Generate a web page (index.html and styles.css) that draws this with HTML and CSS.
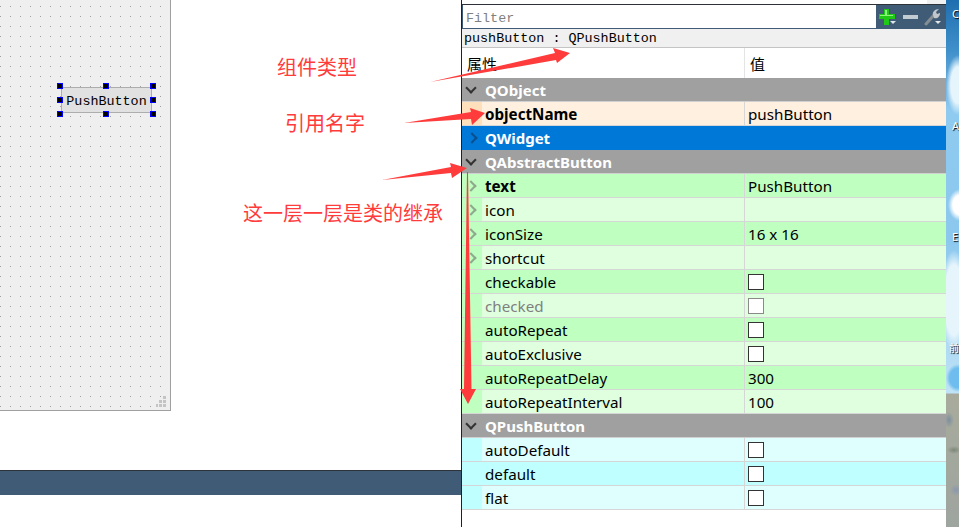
FILE: index.html
```html
<!DOCTYPE html>
<html lang="en">
<head>
    <meta charset="UTF-8">
    <meta name="viewport" content="width=device-width, initial-scale=1.0">
    <title>Property Editor</title>
    <link rel="stylesheet" href="styles.css">
</head>
<body>
    <div class="screen">
        <div class="designer">
            <div class="canvas">
                <div class="widget">
                    <span class="push-button">PushButton</span>
                    <i class="handle h-tl"></i><i class="handle h-tc"></i><i class="handle h-tr"></i>
                    <i class="handle h-ml"></i><i class="handle h-mr"></i>
                    <i class="handle h-bl"></i><i class="handle h-bc"></i><i class="handle h-br"></i>
                </div>
                <svg class="grip" width="11" height="12" viewBox="0 0 11 12">
                    <path fill="#c4c4c4" d="M7 0h3v3H7zM3 4h3v3H3zM7 4h3v3H7zM0 8h2v3H0zM3 8h3v3H3zM7 8h3v3H7z"/>
                </svg>
            </div>
            <div class="status-bar"></div>
        </div>

        <div class="panel">
            <div class="filter-row">
                <div class="filter-input">Filter</div>
                <div class="tools">
                    <svg width="18" height="18" viewBox="0 0 18 18">
                        <path fill="#1fc916" d="M5 1h5v5h6v5h-6v6H5v-6H0V6h5z"/>
                        <path fill="#8cf57c" d="M6 2h2v5H6zM1 7h13v1H1z"/>
                        <path fill="#dfe6ec" d="M11 13h6l-3 3z"/>
                    </svg>
                    <svg width="15" height="18" viewBox="0 0 15 18">
                        <path fill="#c3cbd2" d="M0 7h15v4H0z"/>
                    </svg>
                    <svg width="18" height="18" viewBox="0 0 18 18">
                        <path fill="none" stroke="#858d94" stroke-width="3" stroke-linecap="round" d="M2 16 10 7"/>
                        <path fill="#c0c6cb" d="M9 7c-1-3 2-6 6-6l-3 3 1 2 3-1c0 4-3 6-6 5z"/>
                        <path fill="#dfe6ec" d="M11 13h6l-3 3z"/>
                    </svg>
                </div>
            </div>
            <div class="class-label">pushButton : QPushButton</div>
            <div class="head-row">
                <div class="cell-name">属性</div>
                <div class="cell-value">值</div>
            </div>

            <div class="row group"><span class="gutter"><span class="arrow open"></span></span><span class="label">QObject</span></div>
            <div class="row peach"><span class="gutter"></span><span class="label bold">objectName</span><span class="value">pushButton</span></div>
            <div class="row group selected"><span class="gutter"><span class="arrow"></span></span><span class="label">QWidget</span></div>
            <div class="row group"><span class="gutter"><span class="arrow open"></span></span><span class="label">QAbstractButton</span></div>

            <div class="row green"><span class="gutter"><span class="arrow"></span></span><span class="label bold">text</span><span class="value">PushButton</span></div>
            <div class="row green alt"><span class="gutter"><span class="arrow"></span></span><span class="label">icon</span><span class="value"></span></div>
            <div class="row green"><span class="gutter"><span class="arrow"></span></span><span class="label">iconSize</span><span class="value">16 x 16</span></div>
            <div class="row green alt"><span class="gutter"><span class="arrow"></span></span><span class="label">shortcut</span><span class="value"></span></div>
            <div class="row green"><span class="gutter"></span><span class="label">checkable</span><span class="value"><i class="check"></i></span></div>
            <div class="row green alt"><span class="gutter"></span><span class="label muted">checked</span><span class="value"><i class="check off"></i></span></div>
            <div class="row green"><span class="gutter"></span><span class="label">autoRepeat</span><span class="value"><i class="check"></i></span></div>
            <div class="row green alt"><span class="gutter"></span><span class="label">autoExclusive</span><span class="value"><i class="check"></i></span></div>
            <div class="row green"><span class="gutter"></span><span class="label">autoRepeatDelay</span><span class="value">300</span></div>
            <div class="row green alt"><span class="gutter"></span><span class="label">autoRepeatInterval</span><span class="value">100</span></div>

            <div class="row group"><span class="gutter"><span class="arrow open"></span></span><span class="label">QPushButton</span></div>
            <div class="row cyan alt"><span class="gutter"></span><span class="label">autoDefault</span><span class="value"><i class="check"></i></span></div>
            <div class="row cyan"><span class="gutter"></span><span class="label">default</span><span class="value"><i class="check"></i></span></div>
            <div class="row cyan alt"><span class="gutter"></span><span class="label">flat</span><span class="value"><i class="check"></i></span></div>
        </div>

        <div class="desktop">
            <span class="desk-label l1">C</span>
            <span class="desk-label l2">A</span>
            <span class="desk-label l3">E</span>
            <span class="desk-label l4">前</span>
        </div>

        <!-- red notes drawn over the screenshot -->
        <span class="note n1">组件类型</span>
        <span class="note n2">引用名字</span>
        <span class="note n3">这一层一层是类的继承</span>
        <svg class="marks" width="959" height="527" viewBox="0 0 959 527">
            <polygon points="430,82 555,53 553,48 570,53 557,63 556,60"/>
            <polygon points="404,123 471,112 470,108 485,113 472,125 471,119"/>
            <polygon points="382,180 451,167 450,163 467,168 452,178 451,173"/>
            <polygon points="467,172 468,172 471.500,389 476,389 468,404 460,389 464,389"/>
        </svg>
    </div>
</body>
</html>
```
FILE: styles.css
```css
* {
    box-sizing: border-box;
}
body {
    margin: 0;
    background-color: white;
    overflow: hidden;
}
.screen {
    position: relative;
    display: flex;
    width: 959px;
    height: 527px;
    overflow: hidden;
}
.designer {
    width: 461px;
    flex-shrink: 0;
}
.canvas {
    position: relative;
    width: 171px;
    height: 411px;
    background-color: #efefef;
    background-image: radial-gradient(circle at 0.5px 0.5px, #a0a0a0 0.5px, transparent 0.5px);
    background-size: 10px 10px;
    background-position: 0 6px;
    border-right: 1px solid #a0a0a0;
    border-bottom: 1px solid #a0a0a0;
}
.widget {
    position: absolute;
    left: 61px;
    top: 87px;
    width: 91px;
    height: 26px;
}
.push-button {
    display: block;
    height: 26px;
    line-height: 27px;
    text-align: center;
    background-color: #e1e1e1;
    border: 1px solid #adadad;
    font-family: "Liberation Mono", monospace;
    font-size: 13.4px;
    color: #000;
}
.handle {
    position: absolute;
    width: 6px;
    height: 6px;
    background-color: #000;
    border: 1px solid #0000ff;
}
.h-tl { left: -4px; top: -4px; }
.h-tc { left: 42px; top: -4px; }
.h-tr { left: 89px; top: -4px; }
.h-ml { left: -4px; top: 10px; }
.h-mr { left: 89px; top: 10px; }
.h-bl { left: -4px; top: 24px; }
.h-bc { left: 42px; top: 24px; }
.h-br { left: 89px; top: 24px; }
.grip {
    position: absolute;
    right: 3px;
    bottom: 2px;
}
.status-bar {
    height: 25px;
    margin-top: 59px;
    background-color: #3f5b75;
    border-top: 1px solid #2d3338;
}
.panel {
    width: 485px;
    flex-shrink: 0;
    height: 527px;
    padding-top: 4px;
    background: linear-gradient(to right, #fff 465px, #f0f0f0 465px) 0 0 / 100% 4px no-repeat, white;
    border-left: 1px solid #1c2227;
}
.filter-row {
    display: flex;
    height: 25px;
    border-top: 1px solid #2d3338;
    border-bottom: 1px solid #3f5b75;
    background-color: #3f5b75;
}
.filter-input {
    width: 414px;
    padding-left: 3px;
    line-height: 27px;
    background-color: white;
    border-left: 1px solid #3f5b75;
    font-family: "Liberation Mono", monospace;
    font-size: 13.4px;
    color: #808080;
}
.tools {
    display: flex;
    align-items: center;
    gap: 6px;
    padding-left: 3px;
}
.class-label {
    height: 19px;
    padding-left: 2px;
    line-height: 20px;
    overflow: hidden;
    background-color: #f0f0f0;
    border-bottom: 1px solid #c4c4c4;
    font-family: "Liberation Mono", monospace;
    font-size: 13.4px;
    color: #000;
}
.head-row {
    display: flex;
    height: 30px;
    line-height: 31px;
    font-family: "Noto Sans CJK SC", sans-serif;
    font-size: 15px;
    color: #000;
}
.cell-name {
    width: 283px;
    padding-left: 5px;
    border-right: 1px solid #e4e4e4;
}
.cell-value {
    padding-left: 5px;
}
.row {
    display: flex;
    align-items: center;
    height: 24px;
    border-bottom: 1px solid #d6d6d6;
    font-family: "Noto Sans", sans-serif;
    font-size: 15.2px;
    color: #000;
}
.gutter {
    display: flex;
    align-items: center;
    width: 20px;
    height: 23px;
    flex-shrink: 0;
    padding-left: 5px;
}
.label {
    width: 263px;
    height: 23px;
    line-height: 25px;
    padding-left: 3px;
    flex-shrink: 0;
    border-right: 1px solid #d6d6d6;
}
.value {
    display: flex;
    align-items: center;
    height: 23px;
    padding-left: 3px;
}
.bold {
    font-weight: bold;
}
.muted {
    color: #808080;
}
.group {
    background-color: #a0a0a0;
    border-bottom: 1px solid #d0d0d0;
    font-size: 15px;
    font-weight: bold;
    color: white;
}
.group .label {
    border-right: none;
}
.group .gutter {
    padding-left: 2px;
    background-color: transparent;
}
.group .arrow {
    margin-left: 4px;
    border-color: #333;
}
.group .arrow.open {
    margin-left: 3px;
    margin-top: -3px;
}
.selected {
    background-color: #0078d7;
    border-bottom-color: #0078d7;
}
.selected .arrow {
    border-color: #0b4f8c;
}
.arrow {
    display: block;
    width: 8px;
    height: 8px;
    margin-left: 0;
    border-top: 2.5px solid #8fa98f;
    border-right: 2.5px solid #8fa98f;
    transform: rotate(45deg);
}
.arrow.open {
    transform: rotate(135deg);
}
.peach { background-color: #fff0df; }
.peach .gutter { background-color: #ffe0bc; }
.green { background-color: #bfffbf; }
.green.alt { background-color: #dfffdf; }
.green .gutter { background-color: #bfffbf; }
.cyan { background-color: #bfffff; }
.cyan.alt { background-color: #dfffff; }
.cyan .gutter { background-color: #bfffff; }
.check {
    display: block;
    width: 16px;
    height: 16px;
    background-color: white;
    border: 1px solid #333;
}
.check.off {
    border-color: #8a8a8a;
}
.desktop {
    position: relative;
    flex-grow: 1;
    background:
        radial-gradient(ellipse 5px 8px at 3px 420px, #7f8ea0, transparent),
        radial-gradient(ellipse 7px 4px at 8px 450px, #7c8878, transparent),
        radial-gradient(ellipse 6px 6px at 10px 490px, #8b97ac, transparent),
        radial-gradient(ellipse 12px 14px at 12px 378px, #6fbdee 70%, transparent),
        radial-gradient(ellipse 12px 30px at 12px 85px, #e6f5fc 60%, transparent),
        radial-gradient(ellipse 12px 16px at 14px 205px, #fff 60%, transparent),
        radial-gradient(ellipse 14px 50px at 8px 300px, #e6f5fc 70%, transparent),
        linear-gradient(to bottom, #1f6fb0 0, #3f8fcb 50px, #8fcaf0 110px, #8cc8ee 240px, #bfe3f7 393px, #a8ab9c 394px, #9ea59f 527px);
}
.desk-label {
    position: absolute;
    font-family: "Noto Sans", sans-serif;
    font-size: 11px;
    line-height: 15px;
    color: white;
    text-shadow: 1px 1px 1px #000;
}
.l1 { left: 6px; top: 6px; }
.l2 { left: 6px; top: 118px; }
.l3 { left: 6px; top: 229px; }
.l4 { left: 3px; top: 340px; font-family: "Noto Sans CJK SC", sans-serif; font-size: 10px; }
.note {
    position: absolute;
    font-family: "Noto Sans CJK SC", sans-serif;
    font-size: 20px;
    line-height: 24px;
    color: #ff3b3b;
}
.n1 { left: 277px; top: 55px; }
.n2 { left: 285px; top: 111px; }
.n3 { left: 243px; top: 201px; }
.marks {
    position: absolute;
    left: 0;
    top: 0;
    fill: #ff3b3b;
}
```
